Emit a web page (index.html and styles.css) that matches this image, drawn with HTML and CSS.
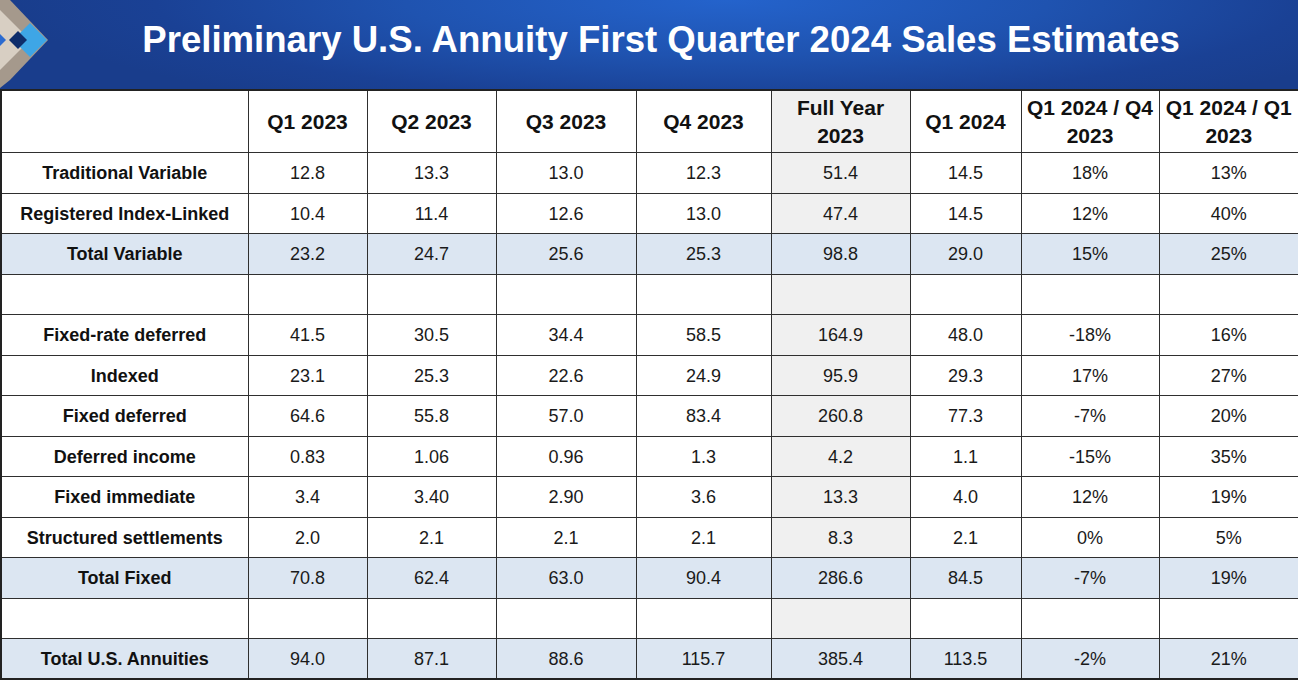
FILE: index.html
```html
<!DOCTYPE html>
<html>
<head>
<meta charset="utf-8">
<link rel="stylesheet" href="styles.css">
</head>
<body>
<header class="banner">
  <svg class="logo" width="50" height="88" viewBox="0 0 50 88">
    <polygon points="0,0 10,0 48,40 10,80 0,88" fill="#a5998c"/>
    <polygon points="0,10 30,40 0,70" fill="#d8cfc3"/>
    <polygon points="30,23 47,40 30,57 13,40" fill="#3ea6e6"/>
    <polygon points="18,31 27,40 18,49 9,40" fill="#0e2d6b"/>
    <polygon points="0,34 6,40 0,46" fill="#2b6bd0"/>
  </svg>
  <h1 class="title">Preliminary U.S. Annuity First Quarter 2024 Sales Estimates</h1>
</header>
<table class="sales">
  <colgroup>
    <col class="c-label"><col class="c1"><col class="c2"><col class="c3"><col class="c4"><col class="c5"><col class="c6"><col class="c7"><col class="c8">
  </colgroup>
  <thead>
    <tr>
      <th></th><th>Q1 2023</th><th>Q2 2023</th><th>Q3 2023</th><th>Q4 2023</th><th class="fy">Full Year<br>2023</th><th>Q1 2024</th><th>Q1 2024 / Q4<br>2023</th><th>Q1 2024 / Q1<br>2023</th>
    </tr>
  </thead>
  <tbody>
    <tr><th>Traditional Variable</th><td>12.8</td><td>13.3</td><td>13.0</td><td>12.3</td><td class="fy">51.4</td><td>14.5</td><td>18%</td><td>13%</td></tr>
    <tr><th>Registered Index-Linked</th><td>10.4</td><td>11.4</td><td>12.6</td><td>13.0</td><td class="fy">47.4</td><td>14.5</td><td>12%</td><td>40%</td></tr>
    <tr class="total"><th>Total Variable</th><td>23.2</td><td>24.7</td><td>25.6</td><td>25.3</td><td class="fy">98.8</td><td>29.0</td><td>15%</td><td>25%</td></tr>
    <tr class="blank"><th></th><td></td><td></td><td></td><td></td><td class="fy"></td><td></td><td></td><td></td></tr>
    <tr><th>Fixed-rate deferred</th><td>41.5</td><td>30.5</td><td>34.4</td><td>58.5</td><td class="fy">164.9</td><td>48.0</td><td>-18%</td><td>16%</td></tr>
    <tr><th>Indexed</th><td>23.1</td><td>25.3</td><td>22.6</td><td>24.9</td><td class="fy">95.9</td><td>29.3</td><td>17%</td><td>27%</td></tr>
    <tr><th>Fixed deferred</th><td>64.6</td><td>55.8</td><td>57.0</td><td>83.4</td><td class="fy">260.8</td><td>77.3</td><td>-7%</td><td>20%</td></tr>
    <tr><th>Deferred income</th><td>0.83</td><td>1.06</td><td>0.96</td><td>1.3</td><td class="fy">4.2</td><td>1.1</td><td>-15%</td><td>35%</td></tr>
    <tr><th>Fixed immediate</th><td>3.4</td><td>3.40</td><td>2.90</td><td>3.6</td><td class="fy">13.3</td><td>4.0</td><td>12%</td><td>19%</td></tr>
    <tr><th>Structured settlements</th><td>2.0</td><td>2.1</td><td>2.1</td><td>2.1</td><td class="fy">8.3</td><td>2.1</td><td>0%</td><td>5%</td></tr>
    <tr class="total"><th>Total Fixed</th><td>70.8</td><td>62.4</td><td>63.0</td><td>90.4</td><td class="fy">286.6</td><td>84.5</td><td>-7%</td><td>19%</td></tr>
    <tr class="blank"><th></th><td></td><td></td><td></td><td></td><td class="fy"></td><td></td><td></td><td></td></tr>
    <tr class="total"><th>Total U.S. Annuities</th><td>94.0</td><td>87.1</td><td>88.6</td><td>115.7</td><td class="fy">385.4</td><td>113.5</td><td>-2%</td><td>21%</td></tr>
  </tbody>
</table>
</body>
</html>
```
FILE: styles.css
```css
html, body {
  margin: 0;
  padding: 0;
  background: #ffffff;
  font-family: "Liberation Sans", Arial, sans-serif;
  overflow: hidden;
}

.banner {
  position: relative;
  height: 89px;
  display: flex;
  align-items: center;
  justify-content: center;
  background: radial-gradient(ellipse 55% 140% at 56% 0%, #2463cc 0%, #1f53b0 45%, #1a4195 80%, #193d8c 100%);
}

.logo {
  position: absolute;
  left: 0;
  top: 0;
}

.title {
  margin: 0;
  padding-left: 24px;
  padding-bottom: 8px;
  color: #ffffff;
  font-size: 36.6px;
  font-weight: bold;
  line-height: 1;
}

.sales {
  width: 1298px;
  border-collapse: collapse;
  table-layout: fixed;
  color: #111;
}

.c-label { width: 247px; }
.c1 { width: 119px; }
.c2 { width: 129px; }
.c3 { width: 140px; }
.c4 { width: 135px; }
.c5 { width: 139px; }
.c6 { width: 111px; }
.c7 { width: 138px; }
.c8 { width: 140px; }

.sales th,
.sales td {
  border: 1px solid #2f2f2f;
  text-align: center;
  padding: 2px 0 0;
  white-space: nowrap;
}

.sales tr > :first-child { border-left: 2px solid #222; }
.sales tr > :last-child { border-right: 2px solid #222; }
.sales thead th { border-top: 2px solid #222; }
.sales tbody tr:last-child > * { border-bottom: 2px solid #222; }

.sales thead th {
  height: 61px;
  font-size: 21px;
  font-weight: bold;
  line-height: 28px;
  color: #111;
  padding: 0;
}

.sales tbody tr { height: 40.5px; }

.sales tbody th {
  font-size: 18px;
  font-weight: bold;
  color: #111;
}

.sales tbody td {
  font-size: 18px;
  font-weight: normal;
  color: #1a1a1a;
}

.sales .fy { background: #f0f0f0; }

.sales tr.total > *,
.sales tr.total > .fy { background: #dce6f2; }
```
